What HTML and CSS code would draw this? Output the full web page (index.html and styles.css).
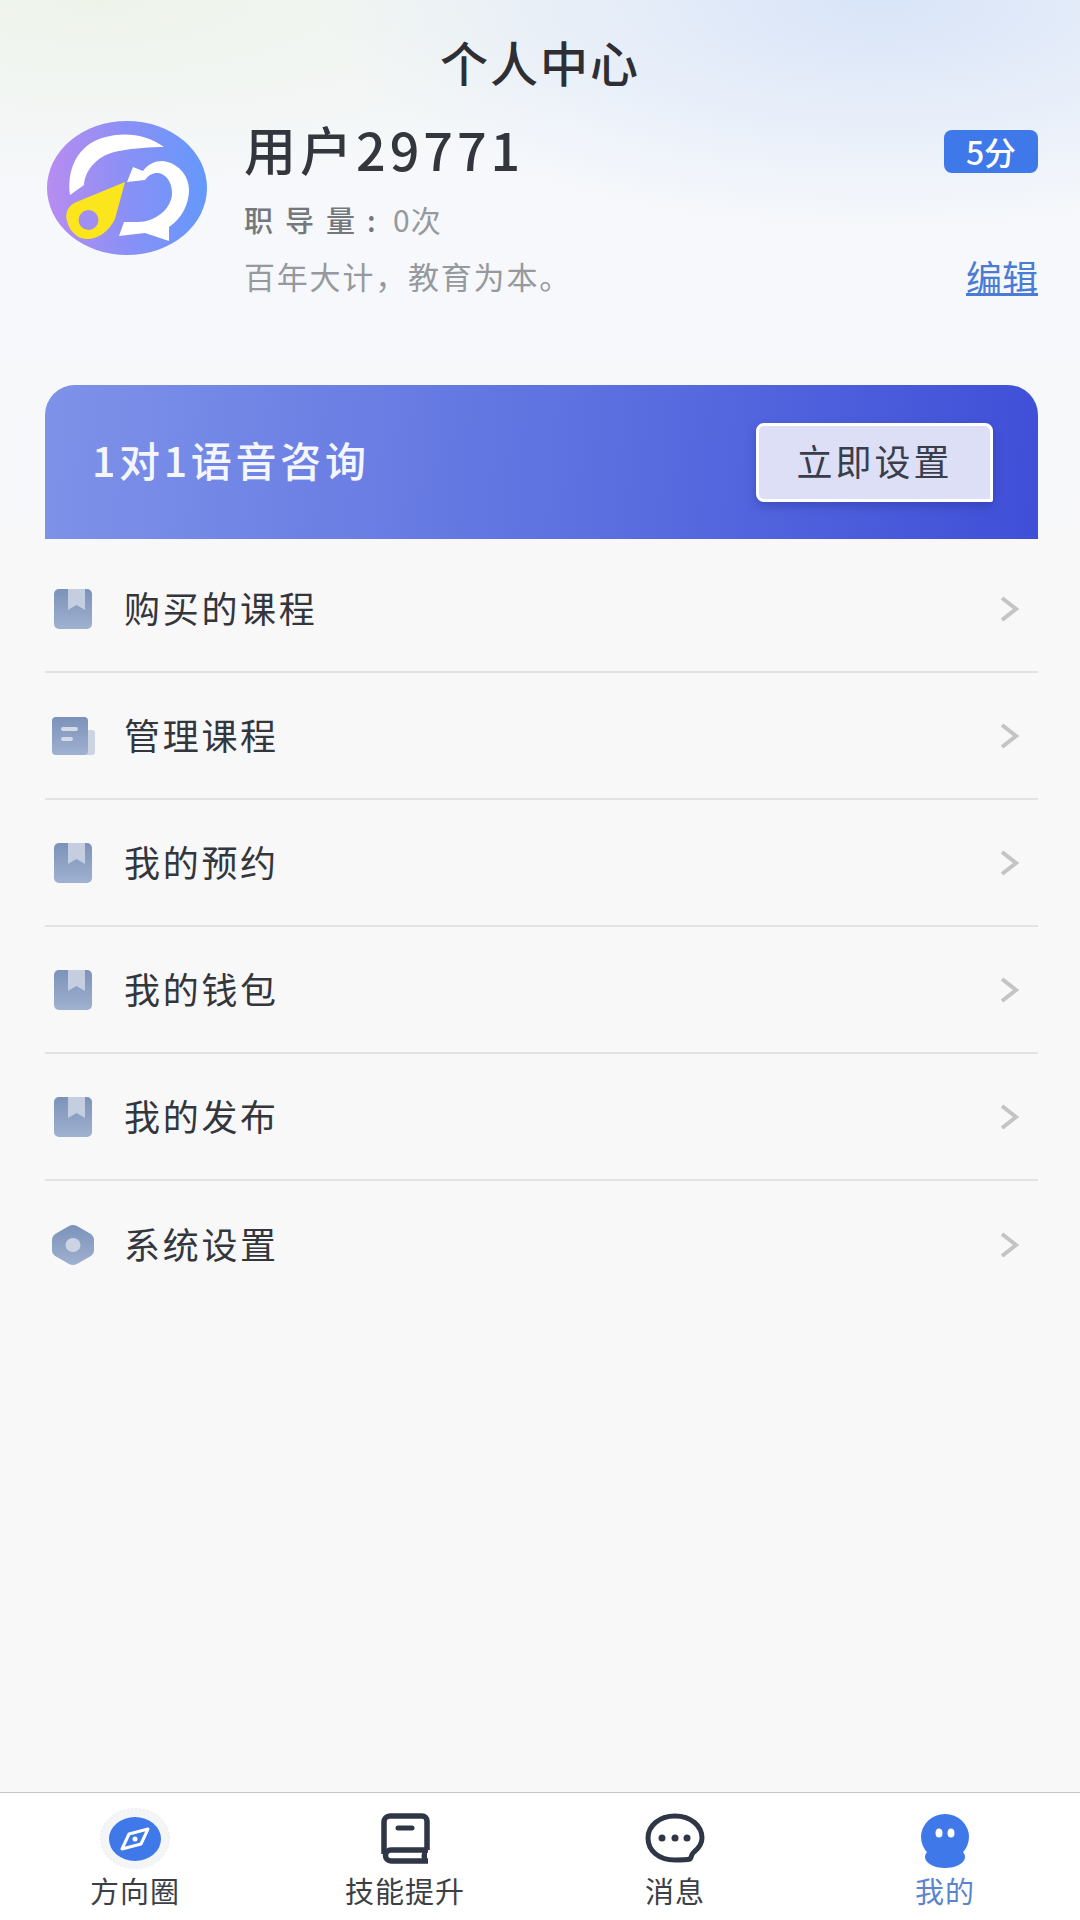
FILE: index.html
```html
<!DOCTYPE html>
<html lang="zh-CN">
  <head>
    <meta charset="utf-8">
    <title>个人中心</title>
    <link rel="stylesheet" href="styles.css">
  </head>
  <body>
    <svg class="defs" width="0" height="0">
      <defs>
        <linearGradient id="iconFill" x1="0" y1="0" x2="0" y2="1">
          <stop offset="0" stop-color="#7b92b9"/>
          <stop offset="1" stop-color="#a0b1d0"/>
        </linearGradient>
        <linearGradient id="logoFill" x1="0" y1="0" x2="1" y2="0">
          <stop offset="0" stop-color="#b88cf0"/>
          <stop offset="0.5" stop-color="#8a90f6"/>
          <stop offset="1" stop-color="#6498fb"/>
        </linearGradient>
        <symbol id="iconBook" viewBox="0 0 38 40">
          <rect width="38" height="40" rx="5" fill="url(#iconFill)"/>
          <path d="M14 0H31V21L22.500 16L14 21Z" fill="#c5cee1"/>
        </symbol>
        <symbol id="iconChevron" viewBox="0 0 20 28">
          <path d="M3 3L17 14L3 25" fill="none" stroke="#c4c4c4" stroke-width="4"/>
        </symbol>
      </defs>
    </svg>

    <div class="page">
      <header class="top">
        <h1 class="title">个人中心</h1>
        <div class="profile">
          <svg class="avatar" viewBox="0 0 160 134">
            <ellipse cx="80" cy="67" rx="80" ry="67" fill="url(#logoFill)"/>
            <path d="M23 74C20 52 28 32 44 22C66 9 98 11 117 26C104 26 88 27 72 30C52 33 38 48 37 64Z" fill="#fff"/>
            <path d="M86 46L96 50C101 43 108 40 115 40C130 41 142 54 142 69C142 84 134 98 122 106L122 120L98 112L72 115L77 101L91 101C108 101 125 88 125 72C125 60 118 52 110 52C105 52 102 54 98 59L80 61Z" fill="#fff"/>
            <path d="M78 61L27 82C20 86 18 94 20 100C23 112 32 118 40 118C52 118 62 110 68 98Z" fill="#fbe51c"/>
            <ellipse cx="41.500" cy="99" rx="10" ry="10" fill="#a08ff2"/>
          </svg>
          <div class="info">
            <div class="nameRow">
              <span class="name">用户29771</span>
              <span class="score">5分</span>
            </div>
            <div class="meta"><span class="metaLabel">职导量:</span><span class="metaValue">0次</span></div>
            <div class="sloganRow">
              <span class="slogan">百年大计，教育为本。</span>
              <a class="edit">编辑</a>
            </div>
          </div>
        </div>
      </header>

      <section class="banner">
        <span class="bannerText">1对1语音咨询</span>
        <button class="bannerBtn">立即设置</button>
      </section>

      <ul class="menu">
        <li class="row">
          <span class="rowIcon"><svg class="bookIcon"><use href="#iconBook"/></svg></span>
          <span class="rowText">购买的课程</span>
          <svg class="chevron"><use href="#iconChevron"/></svg>
        </li>
        <li class="row">
          <span class="rowIcon">
            <svg class="docIcon" viewBox="0 0 43 38">
              <path d="M30 13H40A3 3 0 0 1 43 16V35A3 3 0 0 1 40 38H30Z" fill="#ccd4e4"/>
              <rect width="36" height="38" rx="4" fill="url(#iconFill)"/>
              <rect x="9" y="10" width="17" height="4" rx="2" fill="#d3dae8"/>
              <rect x="9" y="20" width="12" height="4" rx="2" fill="#d3dae8"/>
            </svg>
          </span>
          <span class="rowText">管理课程</span>
          <svg class="chevron"><use href="#iconChevron"/></svg>
        </li>
        <li class="row">
          <span class="rowIcon"><svg class="bookIcon"><use href="#iconBook"/></svg></span>
          <span class="rowText">我的预约</span>
          <svg class="chevron"><use href="#iconChevron"/></svg>
        </li>
        <li class="row">
          <span class="rowIcon"><svg class="bookIcon"><use href="#iconBook"/></svg></span>
          <span class="rowText">我的钱包</span>
          <svg class="chevron"><use href="#iconChevron"/></svg>
        </li>
        <li class="row">
          <span class="rowIcon"><svg class="bookIcon"><use href="#iconBook"/></svg></span>
          <span class="rowText">我的发布</span>
          <svg class="chevron"><use href="#iconChevron"/></svg>
        </li>
        <li class="row">
          <span class="rowIcon">
            <svg class="hexIcon" viewBox="0 0 42 40">
              <path d="M21 0Q23 0 25 1L38 8.500Q42 11 42 15V25Q42 29 38 31.500L25 39Q23 40 21 40Q19 40 17 39L4 31.500Q0 29 0 25V15Q0 11 4 8.500L17 1Q19 0 21 0Z" fill="url(#iconFill)"/>
              <ellipse cx="21" cy="20" rx="7.500" ry="7" fill="#ccd4e4"/>
            </svg>
          </span>
          <span class="rowText">系统设置</span>
          <svg class="chevron"><use href="#iconChevron"/></svg>
        </li>
      </ul>

      <nav class="tabs">
        <div class="tab">
          <span class="tabIcon">
            <svg class="compass" viewBox="0 0 70 61">
              <ellipse cx="35" cy="30.500" rx="34.500" ry="30" fill="#f4f5f7" stroke="#e9eaec" stroke-dasharray="2 2"/>
              <ellipse cx="35" cy="31" rx="26" ry="22" fill="#3f78e8"/>
              <path d="M48 21L29 26L22 41L41 36Z" fill="none" stroke="#fff" stroke-width="3" stroke-linejoin="round"/>
              <circle cx="35" cy="31" r="2.500" fill="#fff"/>
            </svg>
          </span>
          <span class="tabText">方向圈</span>
        </div>
        <div class="tab">
          <span class="tabIcon">
            <svg class="learn" viewBox="0 0 49 51">
              <path d="M46 37V8A5 5 0 0 0 41 3H9A6 6 0 0 0 3 9V41" fill="none" stroke="#2f3645" stroke-width="5.500"/>
              <path d="M47 37H10A5.500 5.500 0 0 0 10 48H47" fill="none" stroke="#2f3645" stroke-width="5.500" stroke-linejoin="round"/>
              <path d="M42 38L46 38V48H42C40 45 40 41 42 38Z" fill="#2f3645"/>
              <path d="M17 15H31" stroke="#2f3645" stroke-width="5" stroke-linecap="round"/>
            </svg>
          </span>
          <span class="tabText">技能提升</span>
        </div>
        <div class="tab">
          <span class="tabIcon">
            <svg class="chat" viewBox="0 0 60 50">
              <path d="M30 3C14 3 3 13 3 25C3 38 14 47 30 47C35 47 41 47 45 46C47 44 46 41 49 39C54 35 57 30 57 25C57 13 46 3 30 3Z" fill="none" stroke="#2f3645" stroke-width="5"/>
              <circle cx="17" cy="25" r="3.500" fill="#2f3645"/>
              <circle cx="30" cy="25" r="3.500" fill="#2f3645"/>
              <circle cx="42" cy="25" r="3.500" fill="#2f3645"/>
            </svg>
          </span>
          <span class="tabText">消息</span>
        </div>
        <div class="tab active">
          <span class="tabIcon">
            <svg class="mine" viewBox="0 0 48 54">
              <ellipse cx="24" cy="43" rx="20" ry="11" fill="#3f78e8"/>
              <ellipse cx="24" cy="23" rx="24" ry="23" fill="#3f78e8"/>
              <ellipse cx="18" cy="19" rx="3.500" ry="4.500" fill="#fff"/>
              <ellipse cx="30" cy="19" rx="3.500" ry="4.500" fill="#fff"/>
            </svg>
          </span>
          <span class="tabText">我的</span>
        </div>
      </nav>
    </div>
  </body>
</html>
```

FILE: styles.css
```css
* {
  box-sizing: border-box;
}

body {
  margin: 0;
  font-family: "Noto Sans CJK SC", "Noto Sans", sans-serif;
  color: #33363c;
}

.defs {
  position: absolute;
}

.page {
  width: 1080px;
  height: 1920px;
  display: flex;
  flex-direction: column;
  background:
    radial-gradient(ellipse 560px 230px at 880px 0, #d8e4f8 0%, rgba(216, 228, 248, 0) 100%),
    radial-gradient(ellipse 620px 190px at 100px 0, #eef3ea 0%, rgba(238, 243, 234, 0) 100%),
    linear-gradient(180deg, #f6f8fb 0, #f6f8fb 300px, #f8f8f9 560px),
    #f8f8f9;
}

/* top area */
.top {
  padding: 31px 42px 0 47px;
}

.title {
  margin: 0 5px 0 0;
  font-size: 48px;
  line-height: 60px;
  font-weight: 500;
  letter-spacing: 2px;
  text-align: center;
  color: #2d2f35;
}

.profile {
  display: flex;
  margin-top: 27px;
  gap: 37px;
}

.avatar {
  width: 160px;
  height: 134px;
  margin-top: 3px;
  flex: none;
}

.info {
  flex: 1;
}

.nameRow {
  height: 66px;
  display: flex;
  justify-content: space-between;
  align-items: center;
}

.name {
  font-size: 52px;
  font-weight: 500;
  letter-spacing: 4px;
  line-height: 62px;
  padding-bottom: 4px;
  color: #33363c;
}

.score {
  width: 94px;
  height: 43px;
  margin-top: 1px;
  display: flex;
  align-items: center;
  justify-content: center;
  border-radius: 8px;
  background-color: #3f78e8;
  color: #fff;
  font-size: 32px;
  line-height: 43px;
  font-weight: 500;
}

.meta {
  display: flex;
  margin-top: 15px;
  height: 40px;
  font-size: 29px;
  line-height: 40px;
}

.metaLabel {
  width: 149px;
  letter-spacing: 12px;
  color: #74777c;
  font-weight: 500;
}

.metaValue {
  font-size: 30px;
  letter-spacing: 1px;
  color: #96999d;
}

.sloganRow {
  display: flex;
  justify-content: space-between;
  align-items: center;
  margin-top: 18px;
  height: 38px;
}

.slogan {
  font-size: 31px;
  line-height: 38px;
  letter-spacing: 1.800px;
  color: #96999d;
}

.edit {
  font-size: 36px;
  line-height: 38px;
  color: #4a7cd6;
  text-decoration: underline;
  text-underline-offset: 1px;
}

/* banner */
.banner {
  height: 154px;
  margin: 90px 42px 0 45px;
  padding: 0 45px 0 47px;
  display: flex;
  justify-content: space-between;
  align-items: center;
  border-radius: 30px 30px 0 0;
  background: linear-gradient(95deg, #7e92e9 0%, #5c70e0 55%, #3f4fd8 100%);
}

.bannerText {
  font-size: 41px;
  line-height: 50px;
  padding-bottom: 7px;
  letter-spacing: 3.700px;
  font-weight: 500;
  color: #f4f6fe;
}

.bannerBtn {
  width: 237px;
  height: 79px;
  padding: 0 0 4px;
  border: 3px solid #fff;
  border-radius: 8px 8px 2px 8px;
  background-color: #dcdff6;
  box-shadow: 0 4px 8px rgba(30, 40, 130, 0.35);
  font-family: inherit;
  font-size: 36px;
  letter-spacing: 3px;
  color: #3a3d4a;
}

/* menu list */
.menu {
  list-style: none;
  margin: 7px 42px 0 45px;
  padding: 0;
  flex: 1;
}

.row {
  height: 127px;
  display: flex;
  align-items: center;
  border-bottom: 2px solid #e2e3e4;
}

.row:last-child {
  border-bottom: none;
}

.rowIcon {
  width: 79px;
  padding-left: 7px;
  display: flex;
  align-items: center;
  flex: none;
}

.bookIcon {
  width: 38px;
  height: 40px;
  margin-left: 2px;
}

.docIcon {
  width: 43px;
  height: 38px;
}

.hexIcon {
  width: 42px;
  height: 40px;
}

.rowText {
  flex: 1;
  font-size: 36px;
  line-height: 46px;
  padding-bottom: 3px;
  letter-spacing: 2.700px;
  color: #33363c;
}

.chevron {
  width: 20px;
  height: 28px;
  margin-right: 19px;
}

/* bottom tabs */
.tabs {
  height: 128px;
  padding-top: 14px;
  display: grid;
  grid-template-columns: repeat(4, 1fr);
  border-top: 1px solid #c4c4c4;
  background-color: #fff;
}

.tab {
  display: flex;
  flex-direction: column;
  align-items: center;
}

.tabIcon {
  height: 62px;
  display: flex;
  align-items: center;
  justify-content: center;
}

.tabText {
  margin-top: 3px;
  font-size: 29px;
  line-height: 36px;
  letter-spacing: 1px;
  color: #3c3f46;
}

.active .tabText {
  color: #5b84cf;
}

.compass {
  width: 70px;
  height: 61px;
}

.learn {
  width: 49px;
  height: 51px;
}

.chat {
  width: 60px;
  height: 50px;
}

.mine {
  width: 48px;
  height: 54px;
  margin-top: 6px;
}
```
